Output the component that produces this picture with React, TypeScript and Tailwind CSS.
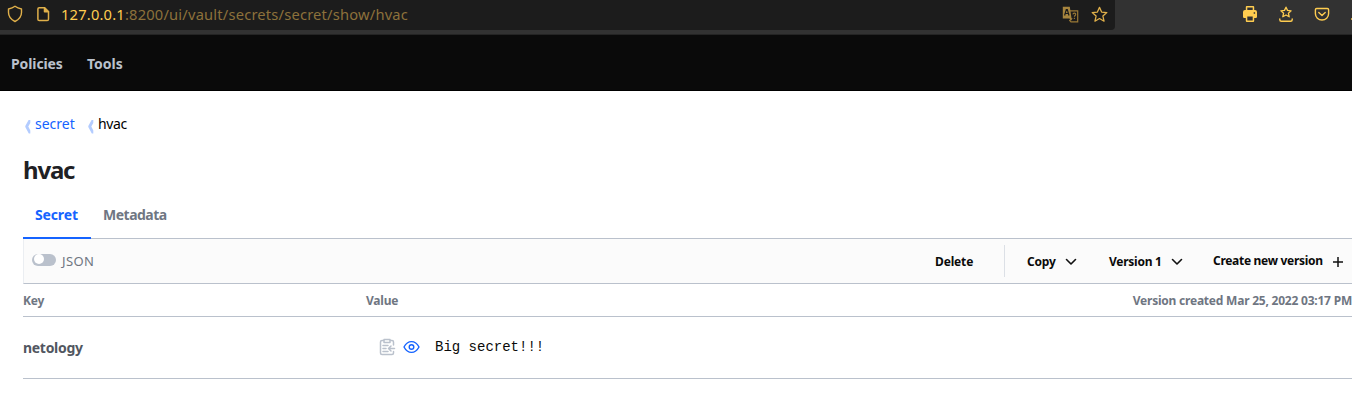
import React from "react";

function Chevron() {
  return (
    <svg className="mt-px" width="12" height="8" viewBox="0 0 12 8" fill="none" stroke="#111" strokeWidth="1.6" strokeLinecap="round" strokeLinejoin="round">
      <path d="M1.5 1.5 6 6l4.5-4.5" />
    </svg>
  );
}

function CrumbArrow() {
  return (
    <svg className="mt-[4px]" width="6" height="15" viewBox="0 0 6 15" fill="#b3ccff">
      <path d="M3.600 1H5.300V4L3.300 7.500 5.300 11.500V14.500H3.800L.3 8V7Z" />
    </svg>
  );
}

const STAR = "M8 1.3 10 5.7 14.9 6.2 11.2 9.5 12.3 14.3 8 11.8 3.7 14.3 4.8 9.5 1.1 6.2 6 5.7Z";

function BrowserBar() {
  return (
    <div className="flex h-[35px] items-start border-b border-[#242424] bg-[#323232]">
      <div className="flex h-[30px] w-[1115px] shrink-0 items-center rounded-br-[4px] bg-[#1c1c1c] pb-[2px] pl-[7px] text-[#e0b04a]">
        <svg width="16" height="18" viewBox="0 0 16 18" fill="none" stroke="currentColor" strokeWidth="1.4" strokeLinejoin="round">
          <path d="M8 1.3C6.3 2.6 3.8 3.6 1.5 4v3.600c0 4 2.500 7 6.500 8.900 4-1.900 6.500-4.900 6.500-8.900V4C12.200 3.600 9.700 2.600 8 1.300Z" />
        </svg>
        <svg className="ml-[13px]" width="14" height="16" viewBox="0 0 14 16" fill="none" stroke="currentColor" strokeWidth="1.5" strokeLinejoin="round">
          <path d="M3.200 1.800h5.300l4 4v7.400q0 1.300-1.300 1.300H3.200q-1.300 0-1.300-1.300V3.100q0-1.300 1.300-1.300Z" />
          <path d="M8.500 1.800v4h4Z" fill="currentColor" />
        </svg>
        <span className="ml-[11px] w-[1001px] whitespace-nowrap text-[14.7px] leading-[28px] tracking-[0.19px] text-[#8c713b]">
          <span className="text-[#ffcd50]">127.0.0.1</span>:8200/ui/vault/secrets/secret/show/hvac
        </span>
        <svg className="shrink-0" width="17" height="17" viewBox="0 0 17 17" fill="none">
          <path d="M7.500 4.800h8.200v11H9L7.300 14" stroke="#9a7936" strokeWidth="1.2" />
          <path d="M.8.8h7l1.700 11.400h1.200L8.800 15l-1.300-2.600H.8Z" fill="#a7853e" />
          <path d="m2.600 9.500 1.700-6h1l1.700 6M3.200 7.500h3.200" stroke="#1c1c1c" strokeWidth="1.2" />
          <path d="M10.900 8.400c.2-1.800 3-1.600 2.800.1-.1 1-1.300 1-1.300 2.200m0 1.100v1.100" stroke="#9a7936" strokeWidth="1.1" />
        </svg>
        <svg className="ml-[12px] shrink-0" width="17" height="17" viewBox="0 0 16 16" fill="none" stroke="currentColor" strokeWidth="1.2" strokeLinejoin="round">
          <path d={STAR} />
        </svg>
      </div>
      <div className="flex h-[28px] flex-1 items-center overflow-hidden pl-[127px] text-[#ffcd50]">
        <svg className="shrink-0" width="16" height="16" viewBox="0 0 16 16">
          <path fillRule="evenodd" fill="currentColor" d="M4.800 0h6.400q1 0 1 1v3h.8q2 0 2 2v4.800q0 1.200-1.200 1.200h-1.600v3q0 1-1 1H4.800q-1 0-1-1v-3H2.200Q1 12 1 10.800V6q0-2 2-2h.8V1q0-1 1-1Zm.5 1.500V4h5.400V1.500Zm0 9v4h5.400v-4Zm6.400-4.200v1.400h1.400V6.300Z" />
        </svg>
        <svg className="ml-[20px] shrink-0" width="16" height="17" viewBox="0 0 16 17" fill="none" stroke="currentColor" strokeLinejoin="round" strokeLinecap="round">
          <path d="m8 1.200 1.500 3.200 3.600.4-2.700 2.400.8 3.600L8 9l-3.200 1.800.8-3.600-2.700-2.400 3.600-.4Z" strokeWidth="1.300" />
          <path d="M1.800 13v.7q0 1.500 1.500 1.500h9.400q1.500 0 1.500-1.500V13" strokeWidth="1.400" />
        </svg>
        <svg className="ml-[20px] shrink-0" width="16" height="16" viewBox="0 0 16 16" fill="none" stroke="currentColor" strokeWidth="1.4" strokeLinecap="round" strokeLinejoin="round">
          <path d="M2.700 2.500h10.600q1.300 0 1.300 1.300v4a6.600 6.200 0 0 1-13.200 0v-4q0-1.300 1.300-1.300ZM4.800 6.400 8 9.400l3.200-3" />
        </svg>
        <span className="ml-[21px] mt-[10px] h-[2px] w-[2px] shrink-0 bg-[#c9a24a]" />
      </div>
    </div>
  );
}

export default function App() {
  return (
    <div className="h-[409px] w-[1352px] overflow-hidden bg-white font-['Noto_Sans','Open_Sans',sans-serif] text-[14px]">
      <BrowserBar />
      <nav className="flex h-14 items-center border-b border-black bg-[#0a0a0a] pl-[11px] pt-[2px] font-bold leading-5 text-[#bac1cc]">
        <a className="w-[76px] whitespace-nowrap tracking-[-0.1px]">Policies</a>
        <a className="tracking-[0px]">Tools</a>
      </nav>
      <main className="pl-[23px]">
        <div className="flex h-[66px] items-center pl-[2px] leading-5">
          <CrumbArrow />
          <a className="ml-[4px] w-[53px] tracking-[0px] text-[#1563ff]">secret</a>
          <CrumbArrow />
          <span className="ml-[4px] tracking-[-0.4px] text-black">hvac</span>
        </div>
        <h1 className="flex h-[34px] items-center pb-[9px] text-[24px] font-bold leading-[25px] tracking-[-1.2px] text-[#1f2124]">hvac</h1>
        <div className="flex h-[48px] border-b border-[#bac1cc] font-bold">
          <div className="h-[48px] w-[68px] border-b-2 border-[#1563ff] pl-3 pt-[14px] leading-5 tracking-[-0.15px] text-[#1563ff]">Secret</div>
          <div className="pl-[12px] pt-[14px] leading-5 tracking-[-0.5px] text-[#6f7682]">Metadata</div>
        </div>
        <div className="flex h-[45px] items-center border-b border-l border-b-[#bac1cc] border-l-[#ebeef2] bg-[#fbfbfb] pl-2 text-[12px] font-bold text-[#0a0a0a]">
          <div className="mb-[3px] flex h-3 w-6 items-start rounded-full bg-[#bac1cc] pl-[2px]">
            <span className="h-[10px] w-[10px] rounded-full bg-white" />
          </div>
          <span className="ml-[6px] mt-[2px] w-[873px] text-[13px] font-normal tracking-[0.4px] text-[#6f7682]">JSON</span>
          <span className="mt-[2px] w-[69px] tracking-[-0.15px]">Delete</span>
          <span className="h-8 w-px bg-[#dce0e6]" />
          <span className="ml-[22px] mt-[2px] w-[38px] tracking-[-0.2px]">Copy</span>
          <Chevron />
          <span className="ml-[32px] mt-[2px] w-[62px] whitespace-nowrap tracking-[-0.25px]">Version 1</span>
          <Chevron />
          <span className="ml-[30px] w-[119px] whitespace-nowrap tracking-[-0.3px]">Create new version</span>
          <svg className="mt-px" width="12" height="12" viewBox="0 0 12 12" stroke="#111" strokeWidth="1.5"><path d="M6 1v10M1 6h10" /></svg>
        </div>
        <div className="flex h-[33px] items-center border-b border-[#bac1cc] pt-[2px] text-[12px] font-bold text-[#6f7682]">
          <span className="w-[343px] tracking-[-0.2px]">Key</span>
          <span className="w-[767px] tracking-[-0.2px]">Value</span>
          <span className="whitespace-nowrap tracking-[-0.22px]">Version created Mar 25, 2022 03:17 PM</span>
        </div>
        <div className="flex h-[62px] items-center border-b border-[#bac1cc]">
          <span className="w-[356px] font-bold tracking-[-0.3px] text-[#525761]">netology</span>
          <svg className="mb-px" width="17" height="18" viewBox="0 0 17 18" fill="none" stroke="#bac1cc" strokeWidth="1.5" strokeLinecap="round" strokeLinejoin="round">
            <path d="M4.500 2.500H3Q1.500 2.500 1.500 4v11q0 1.500 1.500 1.500h10q1.500 0 1.500-1.500v-1.500M11.500 2.500H13q1.500 0 1.500 1.500v3" />
            <path d="M5 1.500h6v3H5ZM4 7.500h5M4 10.500h3M4 13.500h5M15.500 10.500H9.800M12 8l-2.500 2.500L12 13" />
          </svg>
          <svg className="mb-px ml-[7px]" width="17" height="14" viewBox="0 0 17 14" fill="none" stroke="#1563ff" strokeWidth="1.4">
            <path d="M1 7C4.800-.2 12.200-.2 16 7 12.200 14.200 4.800 14.200 1 7Z" strokeLinejoin="round" /><circle cx="8.500" cy="7" r="2.300" />
          </svg>
          <span className="mb-[2px] ml-[15px] font-['Liberation_Mono',monospace] text-[14px] leading-5 text-[#0a0a0a]">Big secret!!!</span>
        </div>
      </main>
    </div>
  );
}
